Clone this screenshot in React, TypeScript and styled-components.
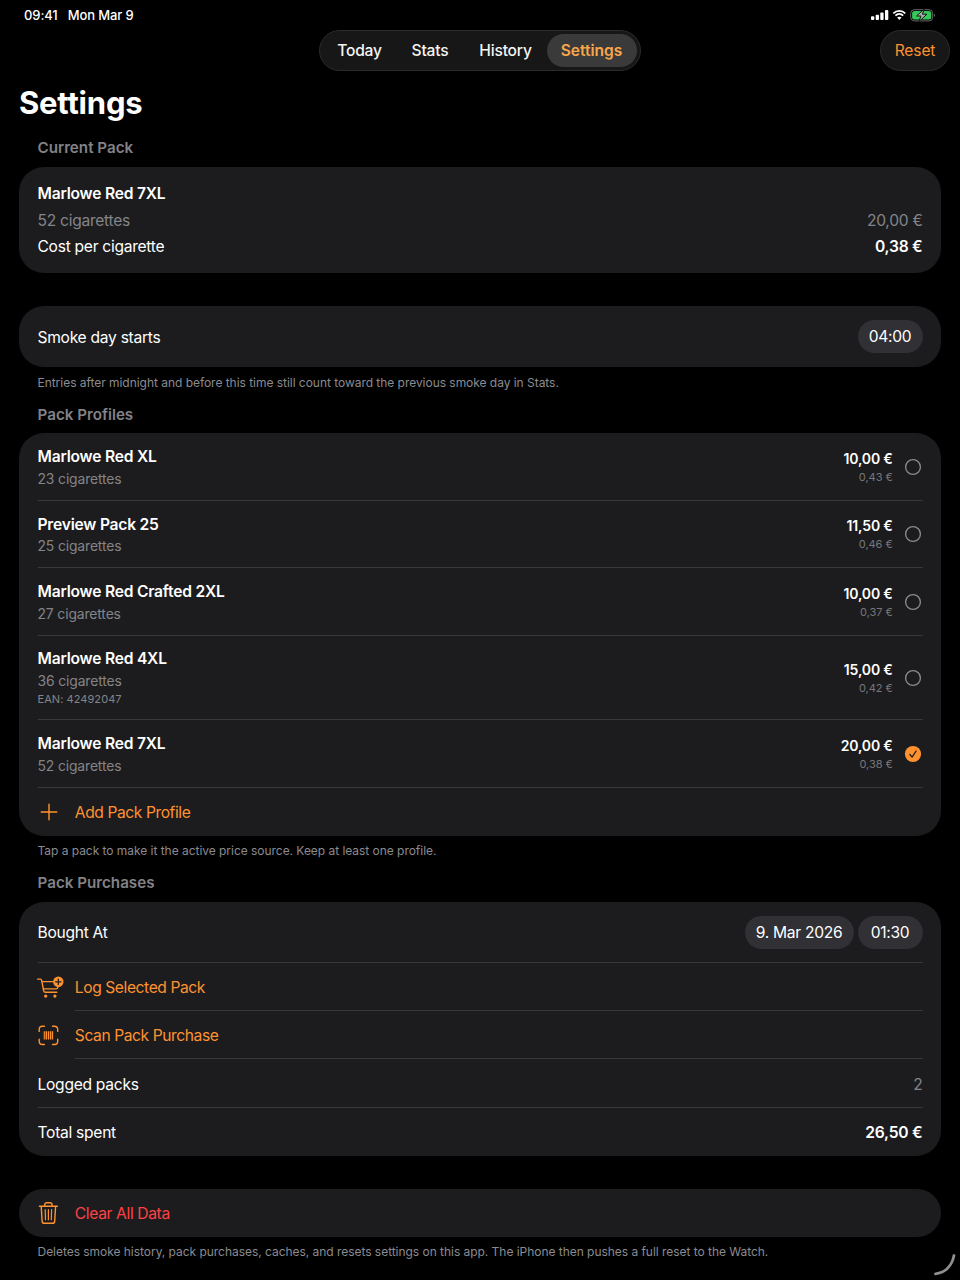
import React from "react";
import styled, { createGlobalStyle, css } from "styled-components";

const orange = "#ff9230";
const gray = "#8b8b90";
const dim = "#848488";

const Global = createGlobalStyle`
  * { box-sizing: border-box; }
  body { margin: 0; background: #000; overflow: hidden; }
  button { font: inherit; border: 0; background: none; padding: 0; color: inherit; letter-spacing: inherit; }
`;

const Screen = styled.div`
  position: relative;
  width: 960px;
  height: 1280px;
  overflow: hidden;
  background: #000;
  color: #fff;
  font-family: Inter, "Liberation Sans", sans-serif;
  font-size: 15.6px;
  letter-spacing: -0.28px;
  line-height: 20px;
  white-space: nowrap;
`;

const StatusBar = styled.div`
  display: flex;
  align-items: center;
  height: 30px;
  padding: 0 24px;
  font-size: 13px;
  font-weight: 500;
  letter-spacing: -0.1px;
`;

const StatusDate = styled.span`
  margin-left: 10px;
`;

const StatusIcons = styled.svg`
  margin-left: auto;
`;

const NavBar = styled.nav`
  display: grid;
  grid-template-columns: 1fr 322px 1fr;
  align-items: center;
  height: 41px;
  padding: 0 10px 0 9px;
`;

const glass = css`
  background: #171717;
  border: 1px solid #2b2b2b;
  border-radius: 21px;
  height: 41px;
`;

const TabGroup = styled.div`
  ${glass}
  grid-column: 2;
  display: flex;
  align-items: center;
  padding: 0 3px 0 4px;
`;

const Tab = styled.button<{ $width: number; $active?: boolean }>`
  width: ${(p) => p.$width}px;
  height: 33px;
  border-radius: 17px;
  font-weight: ${(p) => (p.$active ? 600 : 500)};
  letter-spacing: ${(p) => (p.$active ? -0.05 : -0.2)}px;
  color: ${(p) => (p.$active ? "#f8a64c" : "#f4f4f4")};
  background: ${(p) => (p.$active ? "#3a3a3a" : "transparent")};
`;

const ResetButton = styled.button`
  ${glass}
  justify-self: end;
  width: 70px;
  letter-spacing: -0.14px;
  color: ${orange};
`;

const Title = styled.h1`
  margin: 12px 0 0 19px;
  font-size: 31px;
  line-height: 40px;
  font-weight: 700;
  letter-spacing: -0.2px;
`;

const Content = styled.main`
  padding: 0 19px;
`;

const SectionTitle = styled.h2<{ $top: number }>`
  margin: ${(p) => p.$top}px 0 8.5px 18.5px;
  font-size: 15.2px;
  line-height: 20px;
  font-weight: 600;
  letter-spacing: 0;
  color: #828287;
`;

const Footnote = styled.p`
  margin: 6.5px 0 0 18.5px;
  font-size: 12px;
  line-height: 18px;
  letter-spacing: -0.035px;
  color: ${gray};
`;

const Card = styled.section<{ $top?: number; $radius?: number }>`
  margin-top: ${(p) => p.$top ?? 0}px;
  padding: 0 18.5px;
  border-radius: ${(p) => p.$radius ?? 25}px;
  background: #1c1c1e;
`;

const Summary = styled.div`
  display: flex;
  flex-direction: column;
  justify-content: center;
  gap: 6.4px;
  height: 106.7px;
  padding-top: 1.5px;
`;

const Line = styled.div`
  display: flex;
  justify-content: space-between;
`;

const Row = styled.div<{ $height: number; $inset?: number; $last?: boolean }>`
  display: flex;
  align-items: center;
  height: ${(p) => p.$height}px;
  background: ${(p) =>
    p.$last
      ? "none"
      : `linear-gradient(#38383b, #38383b) ${p.$inset ?? 0}px 100% / 100% 1px no-repeat`};
`;

const Label = styled.span`
  padding-top: 2px;
`;

const Strong = styled.span`
  font-weight: 600;
  letter-spacing: -0.21px;
`;

const Muted = styled.span`
  color: ${dim};
`;

const Names = styled.div`
  display: flex;
  flex-direction: column;
  flex: 1;
  padding-top: 2px;
`;

const Sub = styled.span`
  margin-top: 1.6px;
  font-size: 13.9px;
  letter-spacing: -0.13px;
  color: ${dim};
`;

const Code = styled.span`
  margin-top: 0.4px;
  font-size: 11px;
  line-height: 17px;
  letter-spacing: 0.06px;
  color: ${dim};
`;

const Prices = styled.div`
  display: flex;
  flex-direction: column;
  align-items: flex-end;
  margin-right: 11.4px;
`;

const Price = styled.span`
  font-size: 14px;
  line-height: 20px;
  font-weight: 600;
  letter-spacing: -0.15px;
`;

const UnitPrice = styled.span`
  font-size: 11px;
  line-height: 16px;
  letter-spacing: -0.05px;
  color: #77777b;
`;

const Pills = styled.div`
  display: flex;
  gap: 4px;
  margin-left: auto;
`;

const Pill = styled.span<{ $width: number }>`
  width: ${(p) => p.$width}px;
  height: 33px;
  border-radius: 17px;
  background: #303035;
  line-height: 33px;
  text-align: center;
`;

const Trailing = styled.span`
  margin-left: auto;
  padding-top: 2px;
`;

const Action = styled.button<{ $danger?: boolean }>`
  display: flex;
  align-items: center;
  letter-spacing: ${(p) => (p.$danger ? -0.36 : -0.41)}px;
  color: ${(p) => (p.$danger ? "#ff4245" : orange)};
`;

const IconSlot = styled.span`
  display: flex;
  width: 37.3px;
  color: ${orange};
`;

const ResizeCorner = styled.svg`
  position: absolute;
  right: 0;
  bottom: 0;
`;

const RadioMark = styled.svg`
  margin-right: 0.4px;
`;

const line = {
  fill: "none",
  stroke: "currentColor",
  strokeWidth: 1.4,
  strokeLinecap: "round" as const,
  strokeLinejoin: "round" as const,
};

const PlusIcon = () => (
  <svg width="28" height="24" viewBox="0.500 0 28 24" {...line}>
    <path d="M11.500 4.2v15.6M3.700 12h15.6" />
  </svg>
);

const CartIcon = () => (
  <svg width="28" height="24" viewBox="0.7 -0.6 28 24" overflow="visible" {...line}>
    <path d="M0.300 3.500h2.800c.7 0 1 .3 1.200 1l2 10.500c.2 1.100.7 1.600 1.800 1.600h11.400" />
    <path d="M5 6h10.300M6.400 13.300h12.300c1.100 0 1.700-.5 1.900-1.500l.1-.5" />
    <circle cx="8.400" cy="20.500" r="1.650" fill="currentColor" stroke="none" />
    <circle cx="17.600" cy="20.500" r="1.650" fill="currentColor" stroke="none" />
    <circle cx="21" cy="6.200" r="5.200" fill="currentColor" stroke="none" />
    <path d="M21 3.500v5.400M18.300 6.200h5.400" stroke="#1c1c1e" strokeWidth="1.2" />
  </svg>
);

const ScanIcon = () => (
  <svg width="28" height="24" viewBox="0.300 -0.400 28 24" {...line}>
    <path d="M1.500 8V6c0-2 1.100-3.200 3.200-3.200h2M14.800 2.800h2c2.100 0 3.200 1.200 3.200 3.200v2M20 15.900v2c0 2-1.100 3.200-3.200 3.200h-2M6.700 21.100h-2c-2.100 0-3.200-1.200-3.200-3.200v-2" />
    <path d="M6.600 7.900v8.200M14.900 7.900v8.200" strokeWidth="1.100" strokeLinecap="butt" />
    <path d="M8.700 7.900v8.200M12.900 7.900v8.200" strokeWidth="1.600" strokeLinecap="butt" />
    <path d="M10.800 7.900v8.200" strokeWidth="1.100" strokeLinecap="butt" />
  </svg>
);

const TrashIcon = () => (
  <svg width="28" height="24" viewBox="0.300 -0.300 28 24" {...line}>
    <path d="M1.700 5h18M3.500 5l.9 14.800c.1 1.400.9 2.200 2.300 2.200h8c1.400 0 2.200-.8 2.300-2.200L17.900 5M7.100 5V3.300c0-1.200.7-1.900 1.900-1.900h3.400c1.200 0 1.900.7 1.900 1.900V5" />
    <path d="M7.500 8.400l.3 10M10.700 8.400v10M13.900 8.400l-.3 10" strokeWidth="1.200" />
  </svg>
);

const Radio = ({ checked }: { checked?: boolean }) => (
  <RadioMark width="18" height="18" viewBox="0 0 18 18" fill="none">
    {checked ? (
      <>
        <circle cx="9" cy="9" r="8.100" fill={orange} />
        <path d="M5.900 9.500l2.200 2.600 4-6.100" stroke="#1c1c1e" strokeWidth="1.300" strokeLinecap="round" strokeLinejoin="round" />
      </>
    ) : (
      <circle cx="9" cy="9" r="7.400" stroke="#8a8a8f" strokeWidth="1.350" />
    )}
  </RadioMark>
);

const packs = [
  { name: "Marlowe Red XL", count: 23, price: "10,00 €", unit: "0,43 €", height: 67.2 },
  { name: "Preview Pack 25", count: 25, price: "11,50 €", unit: "0,46 €", height: 67.5 },
  { name: "Marlowe Red Crafted 2XL", count: 27, price: "10,00 €", unit: "0,37 €", height: 67.5 },
  { name: "Marlowe Red 4XL", count: 36, price: "15,00 €", unit: "0,42 €", height: 84.5, ean: "42492047" },
  { name: "Marlowe Red 7XL", count: 52, price: "20,00 €", unit: "0,38 €", height: 67.5, active: true },
];

export default function App() {
  return (
    <Screen>
      <Global />
      <StatusBar>
        <span>09:41</span>
        <StatusDate>Mon Mar 9</StatusDate>
        <StatusIcons width="66" height="14" viewBox="0 0 66 14" fill="none">
          <rect x="1" y="8.300" width="3.300" height="3.700" rx="0.900" fill="#fff" />
          <rect x="5.700" y="6.700" width="3.300" height="5.300" rx="0.900" fill="#fff" />
          <rect x="10.300" y="4.500" width="3.300" height="7.500" rx="0.900" fill="#fff" />
          <rect x="15" y="2" width="3.300" height="10" rx="0.900" fill="#fff" />
          <path d="M23.300 5.300c3.500-3.300 8.500-3.300 12 0M25.400 7.600c2.300-2.200 5.500-2.200 7.800 0" stroke="#fff" strokeWidth="1.700" />
          <path d="M27.100 9.600c1.300-1.200 3.100-1.200 4.400 0l-2.200 2.300z" fill="#fff" />
          <rect x="40.700" y="1.700" width="22" height="11.200" rx="3.700" stroke="#68696a" strokeWidth="1" />
          <rect x="42.100" y="3.100" width="19.200" height="8.400" rx="2.500" fill="#35c759" />
          <path d="M64 5.400c1.300.6 1.300 2.900 0 3.500z" fill="#68696a" />
          <path d="M54.300 0.900L46.600 8h4.300l-1.900 5.600 7.900-7.400h-4.500z" fill="#a9aba9" stroke="#0c1c10" strokeWidth="1" />
        </StatusIcons>
      </StatusBar>
      <NavBar>
        <TabGroup>
          <Tab $width={72}>Today</Tab>
          <Tab $width={69}>Stats</Tab>
          <Tab $width={82}>History</Tab>
          <Tab $width={90} $active>Settings</Tab>
        </TabGroup>
        <ResetButton>Reset</ResetButton>
      </NavBar>
      <Title>Settings</Title>
      <Content>
        <SectionTitle $top={15}>Current Pack</SectionTitle>
        <Card>
          <Summary>
            <Line><Strong>Marlowe Red 7XL</Strong></Line>
            <Line><Muted>52 cigarettes</Muted><Muted>20,00 €</Muted></Line>
            <Line><span>Cost per cigarette</span><Strong>0,38 €</Strong></Line>
          </Summary>
        </Card>

        <Card $top={33.3}>
          <Row $height={61} $last>
            <Label>Smoke day starts</Label>
            <Pills><Pill $width={65}>04:00</Pill></Pills>
          </Row>
        </Card>
        <Footnote>Entries after midnight and before this time still count toward the previous smoke day in Stats.</Footnote>

        <SectionTitle $top={13}>Pack Profiles</SectionTitle>
        <Card>
          {packs.map((p) => (
            <Row key={p.name} $height={p.height}>
              <Names>
                <Strong>{p.name}</Strong>
                <Sub>{p.count} cigarettes</Sub>
                {p.ean && <Code>EAN: {p.ean}</Code>}
              </Names>
              <Prices>
                <Price>{p.price}</Price>
                <UnitPrice>{p.unit}</UnitPrice>
              </Prices>
              <Radio checked={p.active} />
            </Row>
          ))}
          <Row $height={48.3} $last>
            <Action><IconSlot><PlusIcon /></IconSlot><Label>Add Pack Profile</Label></Action>
          </Row>
        </Card>
        <Footnote>Tap a pack to make it the active price source. Keep at least one profile.</Footnote>

        <SectionTitle $top={12.7}>Pack Purchases</SectionTitle>
        <Card>
          <Row $height={61.2}>
            <Label>Bought At</Label>
            <Pills>
              <Pill $width={109}>9. Mar 2026</Pill>
              <Pill $width={65}>01:30</Pill>
            </Pills>
          </Row>
          <Row $height={48.3} $inset={37.3}>
            <Action><IconSlot><CartIcon /></IconSlot><Label>Log Selected Pack</Label></Action>
          </Row>
          <Row $height={48.3} $inset={37.3}>
            <Action><IconSlot><ScanIcon /></IconSlot><Label>Scan Pack Purchase</Label></Action>
          </Row>
          <Row $height={48.3}>
            <Label>Logged packs</Label>
            <Trailing><Muted>2</Muted></Trailing>
          </Row>
          <Row $height={48.3} $last>
            <Label>Total spent</Label>
            <Trailing><Strong>26,50 €</Strong></Trailing>
          </Row>
        </Card>

        <Card $top={32.8} $radius={24}>
          <Row $height={48} $last>
            <Action $danger><IconSlot><TrashIcon /></IconSlot><Label>Clear All Data</Label></Action>
          </Row>
        </Card>
        <Footnote>Deletes smoke history, pack purchases, caches, and resets settings on this app. The iPhone then pushes a full reset to the Watch.</Footnote>
      </Content>
      <ResizeCorner width="30" height="30" viewBox="0 0 30 30" fill="none">
        <path d="M24 5.500C22 15.500 15.500 22.500 5.500 23.800" stroke="#8f8f8f" strokeWidth="2.800" strokeLinecap="round" />
      </ResizeCorner>
    </Screen>
  );
}
